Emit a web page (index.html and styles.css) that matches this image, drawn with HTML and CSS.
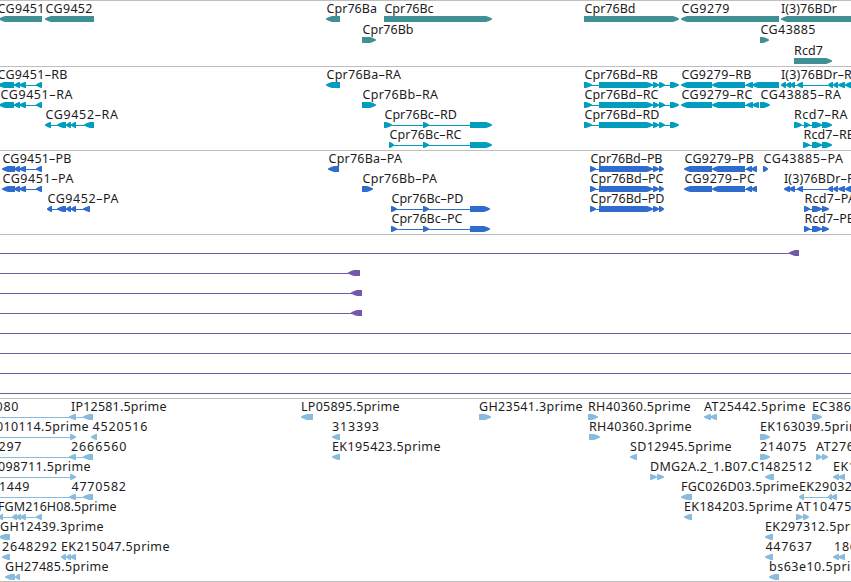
FILE: index.html
```html
<!doctype html>
<html lang="en">
<head>
    <meta charset="UTF-8">
    <title>Genome browser</title>
    <link rel="stylesheet" href="styles.css">
</head>
<body>
<div id="browser">
    <svg class="track genes" data-track="genes" data-step="21"></svg>
    <svg class="track transcripts" data-track="transcripts" data-step="20"></svg>
    <svg class="track proteins" data-track="proteins" data-step="20"></svg>
    <svg class="track alignments" data-track="alignments" data-step="20"></svg>
    <svg class="track ests" data-track="ests" data-step="20"></svg>
</div>
<script src="tracks.js"></script>
</body>
</html>
```
FILE: styles.css
```css
* {
    padding: 0;
    margin: 0;
}

body {
    background-color: #fff;
    overflow: hidden;
}

#browser {
    display: flex;
    flex-direction: column;
    width: 851px;
    border-bottom: 1px solid #bfbfbf;
}

.track {
    display: block;
    box-sizing: border-box;
    width: 100%;
    border-top: 1px solid #bfbfbf;
    overflow: hidden;
}

.track text {
    font-family: "Noto Sans", "Open Sans", sans-serif;
    font-size: 12.5px;
    fill: #1c1c1c;
}

.genes {
    height: 66px;
    color: #408f94;
}

.transcripts {
    height: 84px;
    color: #009dbf;
}

.proteins {
    height: 84px;
    color: #306bce;
}

.alignments {
    height: 164px;
    color: #7359a8;
}

.ests {
    height: 183px;
    color: #87bcde;
}

.exon {
    fill: currentColor;
}

.intron {
    fill: currentColor;
    shape-rendering: crispEdges;
}
```
FILE: tracks.js
```js
// feature: [row, label, label start, label end, parts]
// parts: a<b exon on the minus strand, a>b exon on the plus strand, a-b intron
const tracks = {
    genes: [
        [0, 'CG9451', -2.5, 44.5, '-1<42'],
        [0, 'CG9452', 45.5, 92.5, '45<94'],
        [0, 'Cpr76Ba', 326.5, 377, '326<340'],
        [0, 'Cpr76Bc', 384.5, 433.5, '384>492'],
        [1, 'Cpr76Bb', 362.5, 413.5, '362>376'],
        [0, 'Cpr76Bd', 584.5, 635.5, '584>679'],
        [0, 'CG9279', 681.5, 729.5, '681<779'],
        [0, 'I(3)76BDr', 781, 837, '781<860'],
        [1, 'CG43885', 760.5, 815.5, '760>769'],
        [2, 'Rcd7', 794, 823, '794>832']
    ],
    transcripts: [
        [0, 'CG9451-RB', -2.5, 67.5, '-2<14 14-37 14<20 19<26 36<42'],
        [1, 'CG9451-RA', 0.5, 72.5, '-1<14 14-37 14<20 19<26 36<42'],
        [2, 'CG9452-RA', 45.5, 118, '45<51 51-84 57<66 66<71 71<76 84<94'],
        [0, 'Cpr76Ba-RA', 326.5, 401, '326<340'],
        [1, 'Cpr76Bb-RA', 362.5, 438, '362>376'],
        [2, 'Cpr76Bc-RD', 384.5, 457, '384>392 392-470 423>429 470>492'],
        [3, 'Cpr76Bc-RC', 389.5, 461.5, '389>394 392-470 423>429 470>492'],
        [0, 'Cpr76Bd-RB', 584.5, 658, '584>592 591-670 599>653 653>659 659>665 670>679'],
        [1, 'Cpr76Bd-RC', 584.5, 658.5, '584>592 591-670 599>653 653>659 659>665 670>679'],
        [2, 'Cpr76Bd-RD', 584.5, 659.5, '584>592 591-670 599>653 653>659 659>665 670>679'],
        [0, 'CG9279-RB', 681.5, 751.5, '681<712 712<745 745-753 746<753 752<779'],
        [1, 'CG9279-RC', 681.5, 752.5, '681<712 712<745 745-753 746<753 752<759'],
        [0, 'I(3)76BDr-RA', 781, 860, '781<786 786<791 790<795 795-828 797<803 828<833 833<838 838<845 845<851'],
        [1, 'CG43885-RA', 760.5, 841, '760>770'],
        [2, 'Rcd7-RA', 794, 847.5, '794>802 802-826 804>810 812>822 822>832'],
        [3, 'Rcd7-RB', 803.5, 855, '803>810 808-826 812>822 822>832']
    ],
    proteins: [
        [0, 'CG9451-PB', 2.5, 71.5, '2<15 15-37 14<20 19<26 36<42'],
        [1, 'CG9451-PA', 2.5, 73.5, '2<15 15-37 14<20 19<26 36<42'],
        [2, 'CG9452-PA', 47.5, 118.5, '47<52 52-84 57<66 66<71 71<76 83<90'],
        [0, 'Cpr76Ba-PA', 328.5, 402, '328<339'],
        [1, 'Cpr76Bb-PA', 362.5, 437, '362>373'],
        [2, 'Cpr76Bc-PD', 391.5, 463.5, '391>397 395-470 423>429 470>490'],
        [3, 'Cpr76Bc-PC', 391.5, 462.5, '391>397 395-470 423>429 470>490'],
        [0, 'Cpr76Bd-PB', 590.5, 662.5, '590>596 595-662 599>653 653>659 659>664'],
        [1, 'Cpr76Bd-PC', 590.5, 663.5, '590>596 595-662 599>653 653>659 659>664'],
        [2, 'Cpr76Bd-PD', 590.5, 664.5, '590>596 595-662 599>653 653>659 659>664'],
        [0, 'CG9279-PB', 684.5, 754, '684<712 712<745 745-753 746<752 751<757'],
        [1, 'CG9279-PC', 684.5, 755, '684<712 712<745 745-753 746<752 751<757'],
        [0, 'CG43885-PA', 763.5, 843, '763>768'],
        [1, 'I(3)76BDr-PA', 784, 862, '784<790 789<795 795-828 797<803 828<833 833<838 838<845 845<851'],
        [2, 'Rcd7-PA', 804.5, 856, '804>810 808-826 812>822 822>829'],
        [3, 'Rcd7-PB', 804.5, 855, '804>810 808-826 812>822 822>829']
    ],
    alignments: [
        [0, '', 0, 0, '0-791 789<799'],
        [1, '', 0, 0, '0-350 348<360'],
        [2, '', 0, 0, '0-353 351<362'],
        [3, '', 0, 0, '0-353 351<362'],
        [4, '', 0, 0, '0-851'],
        [5, '', 0, 0, '0-851'],
        [6, '', 0, 0, '0-851'],
        [7, '', 0, 0, '0-851']
    ],
    ests: [
        [0, '080', -4.5, 18.5, '0-86 69<76 83<93'],
        [0, 'IP12581.5prime', 71, 166.5, ''],
        [1, '010114.5prime', -4, 88.5, '0-71 70>76'],
        [1, '4520516', 92.5, 147.5, '91<97'],
        [2, '297', -1.5, 21.5, '0-86 69<76 83<93'],
        [2, '2666560', 71, 126.5, ''],
        [3, '098711.5prime', -2, 90.5, '0-71 70>76'],
        [4, '1449', -1, 29.5, '0-86 69<76 83<93'],
        [4, '4770582', 71.5, 126, ''],
        [5, 'FGM216H08.5prime', -2, 116.5, '-2<3 3-37 12<17 16<21 20<26 36<42'],
        [6, 'GH12439.3prime', 0, 103.5, '-1<10'],
        [7, '2648292', 2, 57, '2<10'],
        [7, 'EK215047.5prime', 61, 169.5, '61<66 66<71 70<76'],
        [8, 'GH27485.5prime', 5, 108.5, '5<15 15<20'],
        [0, 'LP05895.5prime', 301, 399.5, '301<313'],
        [1, '313393', 332, 379, '332<340'],
        [2, 'EK195423.5prime', 332, 440.5, '332<340'],
        [0, 'GH23541.3prime', 479, 582.5, '479>491'],
        [0, 'RH40360.5prime', 588, 690.5, '588>598'],
        [1, 'RH40360.3prime', 589, 691.5, '589>600'],
        [2, 'SD12945.5prime', 630, 731.5, '630<637'],
        [3, 'DMG2A.2_1.B07.C1', 650, 766, '650>657 657>664'],
        [4, 'FGC026D03.5prime', 681, 798.5, '681<692'],
        [5, 'EK184203.5prime', 684, 792.5, '684<692'],
        [0, 'AT25442.5prime', 704, 805.5, '704<711 710<717'],
        [0, 'EC386', 812, 851, '812>822'],
        [1, 'EK163039.5prime', 760, 868, '760>770'],
        [2, '214075', 760, 806.5, '760>770'],
        [2, 'AT276', 816, 854, '816>822 822>828'],
        [3, '482512', 765.5, 812, '765<774'],
        [3, 'EK1', 833, 856, '833<839 838<845'],
        [4, 'EK29032', 799, 852, '799<804 804-830 828<832 831<837'],
        [5, 'AT10475', 796, 851.5, '796>803 803>809'],
        [6, 'EK297312.5prime', 765, 873, '765<773'],
        [7, '447637', 765.5, 812, '765<773'],
        [7, '186', 834, 857, '833<839 838<845'],
        [8, 'bs63e10.5prime', 769, 870, '769<779']
    ]
};

function drawPart(part, top) {
    let [, from, type, to] = part.match(/^(-?\d+)([<>-])(\d+)$/);
    from = Number(from);
    to = Number(to);
    if (type === '-') {
        return `<rect class="intron" x="${from}" y="${top + 3}" width="${to - from}" height="1"/>`;
    }
    // the head takes up to 6px of the exon
    let head = Math.min(6, to - from - 1);
    let tip = type === '<' ? from : to;
    let back = type === '<' ? to : from;
    let dir = type === '<' ? 1 : -1;
    let neck = tip + dir * head;
    let mid = tip + dir * head * 0.5;
    return `<path class="exon" d="M${back} ${top}H${neck}L${mid} ${top + 1}L${tip} ${top + 2.6}V${top + 3.6}L${mid} ${top + 5}L${neck} ${top + 6}H${back}Z"/>`;
}

document.querySelectorAll('.track').forEach((track) => {
    let step = Number(track.dataset.step);
    let html = '';
    tracks[track.dataset.track].forEach(([row, label, start, end, parts]) => {
        let y = row * step;
        parts.split(' ').filter(Boolean).forEach((part) => {
            html += drawPart(part, y + 15);
        });
        if (label) {
            let name = label.replace('-', '–');
            html += `<text x="${start}" y="${y + 12}" textLength="${end - start}">${name}</text>`;
        }
    });
    track.innerHTML = html;
});
```
